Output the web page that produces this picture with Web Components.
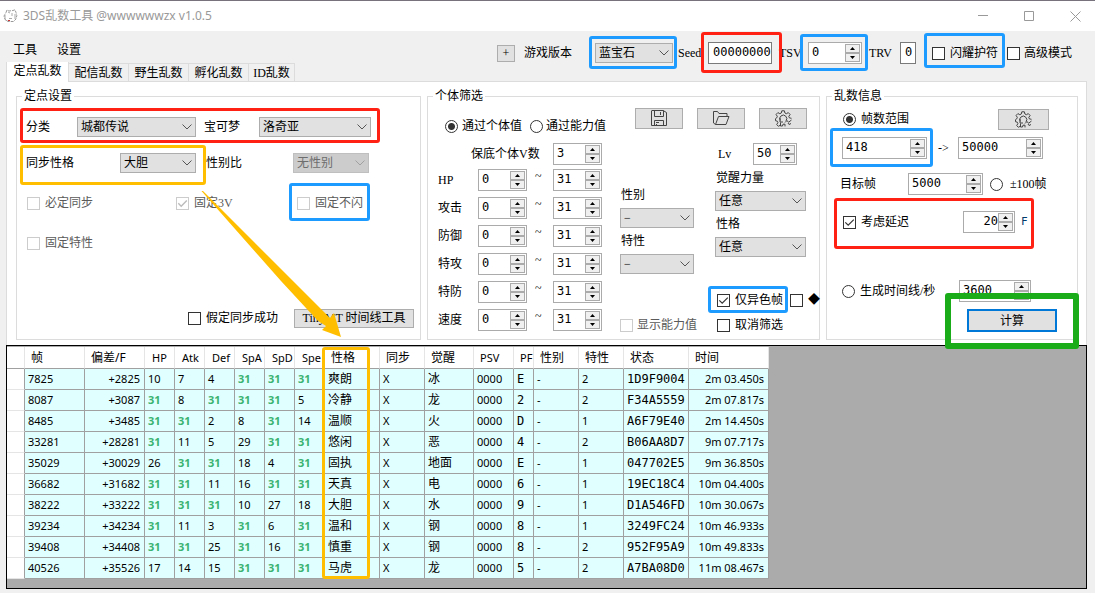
<!DOCTYPE html>
<html lang="zh-CN">
<head>
<meta charset="utf-8">
<title>3DS乱数工具</title>
<style>
  html, body { margin: 0; height: 100%; }
  body { background: #f0f0f0; color: #000; font: 12px/16px "Liberation Serif", "Noto Sans CJK SC", serif; }
</style>
</head>
<body>
<app-window></app-window>

<script>
const define = (name, render) => customElements.define(name, class extends HTMLElement {
  constructor() { super(); this.attachShadow({ mode: 'open' }); }
  connectedCallback() { this.shadowRoot.innerHTML = render(this); }
});
const attr = (el, name, fallback = '') => el.getAttribute(name) ?? fallback;
const BASE = `* { box-sizing: border-box; } input, select, button { font: inherit; color: inherit; margin: 0; border-radius: 0; }`;

/* Drop-down with its label */
define('combo-field', el => `
<style>${BASE}
  :host { display: flex; align-items: center; white-space: nowrap; }
  :host([stacked]) { display: block; }
  label { flex: none; width: var(--label, auto); }
  :host([stacked]) label { display: block; height: 21px; padding-left: 1px; }
  .box { position: relative; width: var(--field, 76px); height: 20px; }
  select { display: block; appearance: none; width: 100%; height: 100%; padding: 0 16px 1px 3px; border: 1px solid #adadad; background: #e1e1e1; }
  select:disabled { background: #ccc; border-color: #bfbfbf; color: #6d6d6d; opacity: 1; }
  svg { position: absolute; right: 4px; top: 7px; pointer-events: none; stroke: #555; }
  select:disabled + svg { stroke: #a0a0a0; }
</style>
<label for="s">${attr(el, 'label')}</label>
<div class="box"><select id="s" ${el.hasAttribute('off') ? 'disabled' : ''}><option>${attr(el, 'value')}</option></select>
<svg width="10" height="6" fill="none"><path d="M.5 .5 5 5 9.500 .5"/></svg></div>`);

/* Number box with up and down buttons */
define('spin-field', el => `
<style>${BASE}
  :host { display: flex; align-items: center; white-space: nowrap; }
  label { flex: none; width: var(--label, auto); }
  .box { display: flex; width: var(--field, 49px); height: 22px; padding: 1px; border: 1px solid #ababab; background: #fff; }
  input { flex: 1; width: 0; min-width: 0; height: 16px; padding: 0 0 0 2px; border: 0; outline: 0; background: none; font: 12px/16px "DejaVu Sans Mono", monospace; text-align: ${attr(el, 'align', 'left')}; }
  .arrows { display: flex; flex-direction: column; width: 15px; background: #ababab; }
  button { flex: 1; display: flex; align-items: center; justify-content: center; padding: 0; border: 1px solid #ababab; background: #f0f0f0; }
</style>
<label for="n">${attr(el, 'label')}</label>
<div class="box"><input id="n" type="text" inputmode="numeric" value="${attr(el, 'value')}" ${el.hasAttribute('label') ? '' : `aria-label="${attr(el, 'hint', '数值')}"`}>
<span class="arrows">
<button aria-label="增加"><svg width="5" height="3"><path d="M0 3 2.5 0 5 3z"/></svg></button>
<button aria-label="减少"><svg width="5" height="3"><path d="M0 0 2.5 3 5 0z"/></svg></button>
</span></div>`);

/* Plain text box with its label */
define('text-field', el => `
<style>${BASE}
  :host { display: flex; align-items: center; white-space: nowrap; }
  label { flex: none; width: var(--label, auto); }
  input { width: var(--field, 64px); height: 22px; padding: 0 0 2px 4px; border: 1px solid #7a7a7a; background: #fff; font: 12px/16px "DejaVu Sans Mono", monospace; }
</style>
<label for="t">${attr(el, 'label')}</label><input id="t" type="text" value="${attr(el, 'value')}">`);

/* Tick box or radio button with its label */
define('check-field', el => `
<style>${BASE}
  :host { display: flex; align-items: center; white-space: nowrap; }
  input { appearance: none; flex: none; width: 13px; height: 13px; border: 1px solid #333; background: #fff center / 11px 11px no-repeat; }
  input[type=radio] { border-radius: 50%; }
  input[type=radio]:checked { background-image: radial-gradient(circle, #333 0 3px, transparent 4px); }
  input[type=checkbox]:checked { background-image: url("data:image/svg+xml,%3Csvg xmlns='http://www.w3.org/2000/svg' viewBox='0 0 11 11' fill='none' stroke='%23333' stroke-width='1.2'%3E%3Cpath d='M1.3 5.3 4.2 8.2 9.8 2.6'/%3E%3C/svg%3E"); }
  label { padding-left: var(--gap, 5px); }
  :host([off]) { color: #5a5a5a; }
  :host([off]) input { border-color: #ccc; }
  :host([off]) input:checked { background-image: url("data:image/svg+xml,%3Csvg xmlns='http://www.w3.org/2000/svg' viewBox='0 0 11 11' fill='none' stroke='%23bbb' stroke-width='1.4'%3E%3Cpath d='M1.3 5.3 4.2 8.2 9.8 2.6'/%3E%3C/svg%3E"); }
</style>
<input id="c" type="${attr(el, 'type', 'checkbox')}" ${el.hasAttribute('on') ? 'checked' : ''} ${el.hasAttribute('off') ? 'disabled' : ''}><label for="c">${attr(el, 'label')}</label>`);

/* Push button */
define('push-button', el => `
<style>${BASE}
  :host { display: block; width: var(--w, 48px); height: var(--h, 21px); }
  button { display: flex; align-items: center; justify-content: center; width: 100%; height: 100%; padding: 0; border: 1px solid #adadad; background: #e1e1e1; white-space: nowrap; }
  :host([primary]) button { border: 2px solid #0078d7; }
</style>
<button ${el.hasAttribute('hint') ? `aria-label="${attr(el, 'hint')}"` : ''}><slot></slot></button>`);

const GLYPHS = {
  save: '<path d="M1 .5h11l3.500 2v13H.5V.5M3.500.5v6h9v-6M9.500 2v3M3.500 15.500v-5h9v5M5 12.500h3M5 14.500h1"/>',
  open: '<path d="M2.500 14.500 .5 13V1.500h4l1.500 2h8v3M2.500 14.500l3-8H16l-3 8z"/>',
  gear: '<path d="M6.300 3 6.800.8h2.600l.5 2.200 1.500.7L13.300 2.600l1.800 1.900-1.300 1.900.6 1.500 2.100.4M6.300 3l-1.500.7-1.900-1.100-1.800 1.800 1.200 2-.6 1.500-1.200.8v2l1.800.5.6 1.400-1.200 2 1.700 1.700 2-1.200M5.500 12.500v3.500h2l.5-1.800h2v2.200"/><path d="M5.300 10.500a3.500 3.500 0 1 1 5.700.3M5 8v4h3M10 12.500l2-2 1.500 1.800 3-2.300M13 13l1 1.500 2-1"/>'
};
define('line-icon', el => `
<style>:host { display: block; width: 17px; height: 17px; } svg { display: block; stroke: #444; fill: none; stroke-width: 1; }</style>
<svg width="17" height="17" viewBox="0 0 17 17">${GLYPHS[attr(el, 'name')]}</svg>`);

/* Titled group of controls */
define('group-box', el => `
<style>${BASE}
  :host { display: block; min-width: 0; }
  fieldset { display: block; height: 100%; min-width: 0; margin: 0; padding: 0; border: 1px solid #dcdcdc; }
  legend { margin-left: 5px; padding: 0 2px; line-height: 16px; }
</style>
<fieldset><legend>${attr(el, 'title-text')}</legend><slot></slot></fieldset>`);

/* Coloured highlight frame that lies over the window */
define('mark-frame', el => `
<style>
  :host { position: absolute; left: var(--x); top: var(--y); width: var(--w); height: var(--h); box-sizing: border-box; border: 3px solid var(--c); border-radius: 3px; pointer-events: none; }
  :host([thick]) { border-width: 6px; }
</style>`);

define('title-bar', () => `
<style>${BASE}
  :host { display: flex; align-items: center; height: 31px; padding-left: 3px; background: #fff; border-top: 1px solid #77727c; color: #999; font: 12px/16px "Noto Sans", "Noto Sans CJK SC", sans-serif; }
  .logo { flex: none; margin-right: 5px; }
  h1 { flex: 1; margin: 0; font: inherit; white-space: nowrap; }
  button { width: 46px; height: 30px; padding: 0; border: 0; background: none; display: grid; place-items: center; }
  button:last-child { margin-right: -3px; }
  svg { display: block; fill: none; stroke: #999; }
</style>
<svg class="logo" width="15" height="14" viewBox="0 0 15 14"><path stroke-dasharray="3 1" d="M3 3.500 4 1l2 1 4-.5L12 .8l1 2.700.8 3-.8 3.500-2.500 2.500H5L2 10.500 1 7z"/><path d="M2 6v4l2 2M5 3l2 1M9 4v3M6 9.500h3M12 5v5" stroke="#aaa"/><path d="M5 11.500h2" stroke="#c33"/></svg>
<h1>3DS乱数工具 @wwwwwwzx v1.0.5</h1>
<button aria-label="最小化"><svg width="10" height="10"><path d="M0 4.500h10"/></svg></button>
<button aria-label="最大化"><svg width="10" height="10"><path d="M.5.5h9v9h-9z"/></svg></button>
<button aria-label="关闭"><svg width="11" height="11"><path d="M.5.5l10 10M10.500.5l-10 10"/></svg></button>`);

define('tool-row', () => `
<style>${BASE}
  :host { display: flex; align-items: center; padding: 11px 0 0 13px; margin-bottom: -2px; }
  nav { display: flex; gap: 20px; align-self: flex-start; width: 484px; font: 12px/14px "Noto Sans CJK SC", sans-serif; }
  a { color: inherit; text-decoration: none; }
</style>
<nav><a href="#tools">工具</a><a href="#settings">设置</a></nav>
<push-button style="--w:18px;--h:17px">+</push-button>
<combo-field label="游戏版本" value="蓝宝石" style="--label:71px;--field:78px;margin-left:9px"></combo-field>
<text-field label="Seed" value="00000000" style="--label:30px;--field:64px;margin-left:5px"></text-field>
<spin-field label="TSV" value="0" style="--label:29px;--field:54px;margin-left:7px"></spin-field>
<text-field label="TRV" value="0" style="--label:31px;--field:16px;margin-left:7px"></text-field>
<check-field label="闪耀护符" style="margin-left:16px"></check-field>
<check-field label="高级模式" style="--gap:4px;margin-left:9px"></check-field>`);

define('tab-strip', () => `
<style>${BASE}
  :host { display: flex; align-items: flex-end; height: 20px; margin: 0 8px 0 6px; border-bottom: 1px solid #dcdcdc; }
  button { flex: none; min-width: 60px; height: 18px; padding: 0; border: 1px solid #dcdcdc; border-width: 1px 1px 0 0; background: #f0f0f0; white-space: nowrap; }
  .on { position: relative; width: 63px; height: 20px; margin-bottom: -1px; padding: 0 0 3px; background: #fff; border-width: 0 1px; }
  .short { min-width: 46px; }
</style>
<button class="on">定点乱数</button><button>配信乱数</button><button>野生乱数</button><button>孵化乱数</button><button class="short">ID乱数</button>`);

define('encounter-group', () => `
<style>${BASE}
  :host { display: block; min-width: 0; }
  group-box { height: 100%; }
  .rows { display: flex; flex-direction: column; gap: 20px; height: 235px; padding: 13px 6px 11px 9px; }
  .row { display: flex; align-items: center; height: 20px; flex: none; }
  .row + .pick { margin-top: -4px; }
  .checks { display: grid; grid-template-columns: 149px 121px auto; padding-left: 1px; }
  .last { margin-top: auto; justify-content: flex-end; gap: 16px; }
</style>
<group-box title-text="定点设置"><div class="rows">
  <div class="row"><combo-field label="分类" value="城都传说" style="--label:51px;--field:119px"></combo-field>
    <combo-field label="宝可梦" value="洛奇亚" style="--label:55px;--field:112px;margin-left:8px"></combo-field></div>
  <div class="row pick"><combo-field label="同步性格" value="大胆" style="--label:94px"></combo-field>
    <combo-field off label="性别比" value="无性别" style="--label:87px;margin-left:10px"></combo-field></div>
  <div class="row checks"><check-field off label="必定同步"></check-field><check-field off on label="固定3V"></check-field><check-field off label="固定不闪"></check-field></div>
  <div class="row checks"><check-field off label="固定特性"></check-field></div>
  <div class="row last"><check-field label="假定同步成功"></check-field><push-button style="--w:120px;--h:19px">TinyMT 时间线工具</push-button></div>
</div></group-box>`);

define('filter-group', () => `
<style>${BASE}
  :host { display: block; min-width: 0; }
  group-box { height: 100%; }
  .cols { display: flex; gap: 18px; height: 235px; padding: 0 0 0 10px; }
  .ivs { width: 164px; display: flex; flex-direction: column; gap: 6px; padding-top: 13px; }
  .radios { display: flex; gap: 8px; height: 18px; padding-left: 7px; }
  .floor { margin: 2px 0 -2px 33px; }
  .iv { display: flex; align-items: center; }
  .iv span { width: 26px; padding: 0 0 8px 8px; line-height: 14px; }
  .side { flex: 1; min-width: 0; display: flex; flex-direction: column; padding: 4px 0 6px; }
  .tools { display: flex; gap: 14px; padding-left: 15px; }
  .pair { display: grid; grid-template-columns: 95px auto; }
  .mid { padding-top: 58px; display: grid; gap: 5px; align-content: start; }
  .right { padding-top: 14px; display: grid; gap: 5px; align-content: start; }
  .feet { margin-top: auto; row-gap: 9px; }
  .foot { display: flex; padding-left: 2px; }
  .off { padding-left: 0; }
</style>
<group-box title-text="个体筛选"><div class="cols">
  <div class="ivs">
    <div class="radios"><check-field type="radio" on label="通过个体值" style="--gap:4px"></check-field><check-field type="radio" label="通过能力值" style="--gap:3px"></check-field></div>
    <spin-field class="floor" label="保底个体V数" value="3" style="--label:82px"></spin-field>
    ${['HP', '攻击', '防御', '特攻', '特防', '速度'].map(n => `<div class="iv"><spin-field label="${n}" value="0" style="--label:40px"></spin-field><span>~</span><spin-field hint="${n}上限" value="31"></spin-field></div>`).join('')}
  </div>
  <div class="side">
    <div class="tools"><push-button hint="保存"><line-icon name="save"></line-icon></push-button><push-button hint="打开"><line-icon name="open"></line-icon></push-button><push-button hint="设置"><line-icon name="gear"></line-icon></push-button></div>
    <div class="pair">
      <div class="mid">
        <combo-field stacked label="性别" value="−" style="--field:74px"></combo-field>
        <combo-field stacked label="特性" value="−" style="--field:74px"></combo-field>
      </div>
      <div class="right">
        <spin-field label="Lv" value="50" style="--label:35px;--field:44px;margin-left:3px"></spin-field>
        <combo-field stacked label="觉醒力量" value="任意" style="--field:91px"></combo-field>
        <combo-field stacked label="性格" value="任意" style="--field:91px"></combo-field>
      </div>
    </div>
    <div class="pair feet">
      <div></div><div class="foot"><check-field on label="仅异色帧"></check-field><check-field label="◆" style="margin-left:7px"></check-field></div>
      <div class="foot off"><check-field off label="显示能力值" style="--gap:4px"></check-field></div><div class="foot"><check-field label="取消筛选"></check-field></div>
    </div>
  </div>
</div></group-box>`);

define('frame-group', () => `
<style>${BASE}
  :host { display: block; min-width: 0; }
  group-box { height: 100%; }
  .rows { display: flex; flex-direction: column; height: 235px; padding: 4px 20px 7px 15px; }
  .row { display: flex; align-items: center; height: 22px; flex: none; white-space: nowrap; }
  .gear { margin-left: auto; margin-right: 8px; }
  .unit { padding-left: 6px; color: #003a6b; font: 11px/16px "DejaVu Sans Mono", monospace; }
</style>
<group-box title-text="乱数信息"><div class="rows">
  <div class="row"><check-field type="radio" on label="帧数范围" style="margin-left:1px"></check-field><push-button class="gear" hint="设置" style="--w:51px"><line-icon name="gear"></line-icon></push-button></div>
  <div class="row" style="margin-top:7px"><spin-field hint="起始帧" value="418" style="--field:85px"></spin-field><span style="width:31px;padding-left:11px">-&gt;</span><spin-field hint="结束帧" value="50000" style="--field:85px"></spin-field></div>
  <div class="row" style="margin:14px 0 0 -2px"><spin-field label="目标帧" value="5000" style="--label:68px;--field:75px"></spin-field><check-field type="radio" label="±100帧" style="--gap:7px;margin-left:7px"></check-field></div>
  <div class="row" style="margin-top:16px"><check-field on label="考虑延迟" style="width:121px;padding-left:1px"></check-field><spin-field hint="延迟" align="right" value="20" style="--field:52px"></spin-field><span class="unit">F</span></div>
  <div class="row" style="margin-top:47px"><check-field type="radio" label="生成时间线/秒" style="width:117px"></check-field><spin-field hint="秒" value="3600" style="--field:72px"></spin-field></div>
  <push-button primary style="--w:90px;--h:24px;margin:7px 0 0 125px">计算</push-button>
</div></group-box>`);

const HEAD = ['帧', '偏差/F', 'HP', 'Atk', 'Def', 'SpA', 'SpD', 'Spe', '性格', '同步', '觉醒', 'PSV', 'PF', '性别', '特性', '状态', '时间'];
const WIDTHS = [60, 60, 30, 30, 30, 30, 30, 30, 55, 45, 49, 40, 20, 45, 45, 65, 80];
const ROWS = `7825 +2825 10 7 4 31 31 31 爽朗 X 冰 0000 E - 2 1D9F9004 2m_03.450s
8087 +3087 31 8 31 31 31 5 冷静 X 龙 0000 2 - 2 F34A5559 2m_07.817s
8485 +3485 31 31 2 8 31 14 温顺 X 火 0000 D - 1 A6F79E40 2m_14.450s
33281 +28281 31 11 5 29 31 31 悠闲 X 恶 0000 4 - 2 B06AA8D7 9m_07.717s
35029 +30029 26 31 31 18 4 31 固执 X 地面 0000 E - 1 047702E5 9m_36.850s
36682 +31682 31 31 11 16 31 31 天真 X 电 0000 6 - 1 19EC18C4 10m_04.400s
38222 +33222 31 31 31 10 27 18 大胆 X 水 0000 9 - 1 D1A546FD 10m_30.067s
39234 +34234 31 11 3 31 6 31 温和 X 钢 0000 8 - 1 3249FC24 10m_46.933s
39408 +34408 31 31 25 31 16 31 慎重 X 钢 0000 8 - 2 952F95A9 10m_49.833s
40526 +35526 17 14 15 31 31 31 马虎 X 龙 0000 5 - 2 A7BA08D0 11m_08.467s`.split('\n').map(r => r.split(' '));
const cellClass = (v, i) => [i === 1 || i === 16 ? 'num' : '', v === '31' && i > 1 && i < 8 ? 'best' : '', i === 12 || i === 15 ? 'mono' : '', i === 8 || i === 10 ? 'han' : ''].join(' ').trim();

define('result-grid', () => `
<style>${BASE}
  :host { display: block; box-sizing: border-box; min-height: 244px; margin: 0 8px 0 6px; padding-top: 1px; border: 1px solid #000; background: #ababab; }
  table { border-collapse: separate; border-spacing: 0; table-layout: fixed; width: 762px; font: 11px/16px "Noto Sans", "Noto Sans CJK SC", sans-serif; }
  th, td { height: 21px; padding: 0 0 0 3px; overflow: hidden; white-space: nowrap; text-align: left; font-weight: 400; border-right: 1px solid #a0a0a0; border-bottom: 1px solid #a0a0a0; background: #e0ffff; }
  thead th { height: 22px; padding-left: 6px; background: #fff; border-right-color: #e5e5e5; }
  thead th:nth-child(n+4):nth-child(-n+9) { padding-left: 7px; }
  tbody th { background: #fff; border-bottom-color: #e5e5e5; }
  .num { text-align: right; padding: 0 4px 0 0; }
  .best { color: #3cb371; font-weight: 700; }
  .mono { font: 12px/16px "DejaVu Sans Mono", monospace; }
  .han, .cjk { font-size: 12px; }
</style>
<table><colgroup><col style="width:18px">${WIDTHS.map(w => `<col style="width:${w}px">`).join('')}</colgroup>
<thead><tr><th></th>${HEAD.map(h => `<th scope="col" class="${/^[A-Z]/.test(h) ? '' : 'cjk'}">${h}</th>`).join('')}</tr></thead>
<tbody>${ROWS.map(r => `<tr><th scope="row"></th>${r.map((v, i) => `<td class="${cellClass(v, i)}">${v.replace('_', ' ')}</td>`).join('')}</tr>`).join('')}</tbody></table>`);

const BLUE = '#1e9bff', RED = '#ff2114', GOLD = '#ffbf00';
const MARKS = [[589, 36, 88, 33, BLUE], [701, 32, 81, 41, RED], [800, 34, 68, 37, BLUE], [924, 33, 81, 35, BLUE],
  [20, 108, 360, 35, RED], [20, 145, 186, 40, GOLD], [289, 183, 81, 38, BLUE], [322, 347, 48, 232, GOLD],
  [708, 286, 80, 27, BLUE], [830, 128, 103, 39, BLUE], [834, 198, 200, 51, RED]];

define('app-window', () => `
<style>${BASE}
  :host { display: flex; flex-direction: column; position: relative; min-height: 100%; overflow: hidden; }
  .page { display: grid; grid-template-columns: 405fr 393fr 252fr; gap: 6px; margin: 0 8px 0 6px; padding: 6px 8px 5px 9px; border: 1px solid #dcdcdc; border-width: 0 1px; background: #fff; }
  .arrow { position: absolute; left: 200px; top: 190px; pointer-events: none; }
</style>
<title-bar></title-bar>
<tool-row></tool-row>
<tab-strip></tab-strip>
<section class="page"><encounter-group></encounter-group><filter-group></filter-group><frame-group></frame-group></section>
<result-grid></result-grid>
${MARKS.map(([x, y, w, h, c]) => `<mark-frame style="--x:${x}px;--y:${y}px;--w:${w}px;--h:${h}px;--c:${c}"></mark-frame>`).join('')}
<mark-frame thick style="--x:945px;--y:293px;--w:134px;--h:56px;--c:#1aad19"></mark-frame>
<svg class="arrow" width="144" height="150" fill="${GOLD}"><path d="M1.500 1 3 1 91 89 130 128 134 123 141 147 122 140 126 136 118 131 81 91z"/></svg>`);
</script>
</body>
</html>
